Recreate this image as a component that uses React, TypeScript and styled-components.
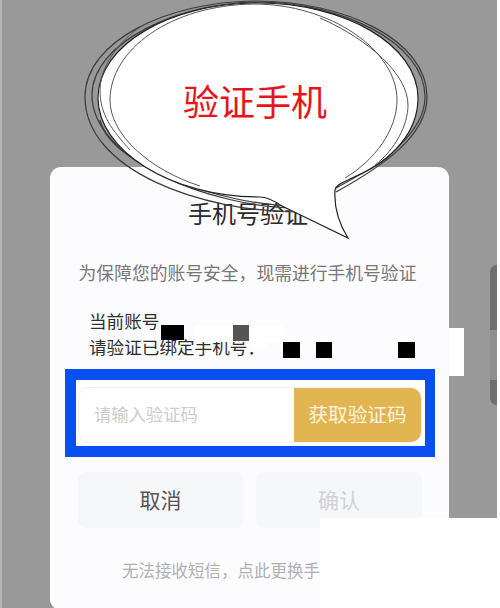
import React from "react";
import styled, { createGlobalStyle } from "styled-components";

const GlobalStyle = createGlobalStyle`
  html, body {
    margin: 0;
    padding: 0;
    background: #fff;
  }
  * {
    box-sizing: border-box;
  }
`;

const Page = styled.div`
  position: relative;
  width: 500px;
  height: 608px;
  overflow: hidden;
  display: flex;
  padding: 167px 0 0 50px;
  background: #999;
  font-family: "Noto Sans CJK SC", "Noto Sans", sans-serif;
`;

const LeftEdge = styled.div`
  position: absolute;
  left: 0;
  top: 0;
  bottom: 0;
  width: 2px;
  background: #b4b4b4;
`;

const RightEdge = styled.div`
  position: absolute;
  right: 0;
  top: 0;
  bottom: 0;
  width: 3px;
  background: #fff;
`;

const Card = styled.div`
  width: 399px;
  height: 443px;
  flex-shrink: 0;
  display: flex;
  flex-direction: column;
  align-items: stretch;
  background: #fcfcfe;
  border-radius: 11px;
`;

const Title = styled.h2`
  margin: 31px 0 0;
  padding-right: 3px;
  height: 30px;
  line-height: 30px;
  font-size: 24px;
  font-weight: 400;
  color: #2b2b2b;
  text-align: center;
`;

const Description = styled.p`
  margin: 31px 0 0;
  padding-right: 4px;
  height: 26px;
  line-height: 26px;
  font-size: 17.8px;
  font-weight: 400;
  color: #777;
  text-align: center;
  white-space: nowrap;
`;

const AccountInfo = styled.div`
  margin: 23px 0 0 39px;
  font-size: 17.6px;
  line-height: 26px;
  color: #2e2e2e;
  white-space: nowrap;
`;

const CodeFrame = styled.div`
  margin: 9px 14px 0 15px;
  height: 88px;
  padding: 7px 3px 3px 2px;
  border: solid #0a4ff2;
  border-width: 11px 10px 11px 11px;
  background: #fff;
`;

const CodeRow = styled.div`
  height: 56px;
  display: flex;
  border: 1px solid #f0f0f6;
  border-radius: 11px;
  background: #fff;
  overflow: hidden;
`;

const CodeInput = styled.div`
  flex: 1;
  display: flex;
  align-items: center;
  padding: 0 0 3px 15px;
  font-size: 17.3px;
  color: #cdcdcd;
`;

const CodeButton = styled.div`
  width: 127px;
  display: flex;
  align-items: center;
  justify-content: center;
  padding-bottom: 3px;
  background: #e3b552;
  font-size: 19.6px;
  color: #fbf3df;
`;

const Actions = styled.div`
  margin: 15px 27px 0 28px;
  display: grid;
  grid-template-columns: 165px 166px;
  column-gap: 13px;
`;

const ActionButton = styled.div<{ $disabled?: boolean }>`
  height: 56px;
  display: flex;
  align-items: center;
  justify-content: center;
  padding-bottom: 3px;
  border-radius: 8px;
  background: #f6f7f9;
  font-size: 21px;
  color: ${(p) => (p.$disabled ? "#d2d2d4" : "#555")};
`;

const Footer = styled.div`
  margin: 29px 0 0 72px;
  height: 26px;
  line-height: 26px;
  font-size: 16.5px;
  color: #b0b0b2;
  white-space: nowrap;
`;

const Bubble = styled.svg`
  position: absolute;
  left: 0;
  top: 0;
  width: 500px;
  height: 608px;
`;

const BubbleLabel = styled.span`
  position: absolute;
  left: 183px;
  top: 74px;
  font-size: 36px;
  line-height: 52px;
  color: #e8141c;
  white-space: nowrap;
`;

const Redaction = styled.div<{ $x: number; $y: number; $w: number; $h: number; $tone?: string }>`
  position: absolute;
  left: ${(p) => p.$x}px;
  top: ${(p) => p.$y}px;
  width: ${(p) => p.$w}px;
  height: ${(p) => p.$h}px;
  background: ${(p) => p.$tone || "#000"};
`;

const SidePill = styled.div`
  position: absolute;
  left: 490px;
  top: 265px;
  width: 7px;
  height: 140px;
  display: flex;
  flex-direction: column;
  border-radius: 8px 0 0 8px;
  overflow: hidden;
`;

const PillPart = styled.div<{ $size: number; $light?: boolean }>`
  height: ${(p) => p.$size}px;
  background: ${(p) => (p.$light ? "#8f8f8f" : "#6f6f6f")};
`;

const App = (): JSX.Element => {
  return (
    <Page>
      <GlobalStyle />
      <LeftEdge />
      <Card>
        <Title>手机号验证</Title>
        <Description>为保障您的账号安全，现需进行手机号验证</Description>
        <AccountInfo>
          当前账号
          <br />
          请验证已绑定手机号：
        </AccountInfo>
        <CodeFrame>
          <CodeRow>
            <CodeInput>请输入验证码</CodeInput>
            <CodeButton>获取验证码</CodeButton>
          </CodeRow>
        </CodeFrame>
        <Actions>
          <ActionButton>取消</ActionButton>
          <ActionButton $disabled>确认</ActionButton>
        </Actions>
        <Footer>无法接收短信，点此更换手机号码</Footer>
      </Card>

      <SidePill>
        <PillPart $size={65} />
        <PillPart $size={50} $light />
        <PillPart $size={25} />
      </SidePill>

      {/* pasted-over patches */}
      <Redaction $x={449} $y={328} $w={15} $h={48} $tone="#fff" />
      <Redaction $x={320} $y={518} $w={180} $h={90} $tone="#fff" />
      <Redaction $x={195} $y={326} $w={88} $h={16} $tone="#fff" />
      <Redaction $x={250} $y={342} $w={16} $h={5} $tone="#fff" />
      <RightEdge />

      <Redaction $x={161} $y={325} $w={23} $h={15} />
      <Redaction $x={233} $y={325} $w={16} $h={16} $tone="#555" />
      <Redaction $x={283} $y={342} $w={17} $h={16} />
      <Redaction $x={316} $y={342} $w={16} $h={16} />
      <Redaction $x={398} $y={342} $w={17} $h={16} />

      <Bubble viewBox="0 0 500 608">
        <g fill="none" stroke="#3c3c3c" strokeWidth="1.2">
          <path d="M300 212C200 212 85 170 85 97C85 40 170 1 256 1C345 1 427 40 427 97C427 135 385 165 336 192" />
          <path d="M300 208C210 208 92 160 92 95C92 42 180 2 258 2C340 2 425 42 425 97C425 132 385 162 336 188" />
          <path d="M295 206C220 205 110 165 100 120" />
        </g>
        <path
          d="M348 238C338 222 334 205 335 190C336 184 345 182 352 178C395 160 418 130 418 98C418 45 345 3 258 3C170 3 98 45 98 98C98 150 170 197 260 197C268 197 276 202 282 206Z"
          fill="#fff"
          stroke="#222"
          strokeWidth="1.2"
          strokeLinejoin="miter"
        />
        <g fill="none" stroke="#555" strokeWidth="1">
          <path d="M200 186C150 170 110 135 110 100C110 50 170 5 254 4C330 4 397 50 397 100C397 130 375 160 345 178" />
          <path d="M130 150C112 130 100 115 100 90C100 60 130 30 150 22" />
          <path d="M320 18C370 40 408 75 408 105C408 125 395 150 375 165" />
        </g>
      </Bubble>
      <BubbleLabel>验证手机</BubbleLabel>
    </Page>
  );
};

export default App;
